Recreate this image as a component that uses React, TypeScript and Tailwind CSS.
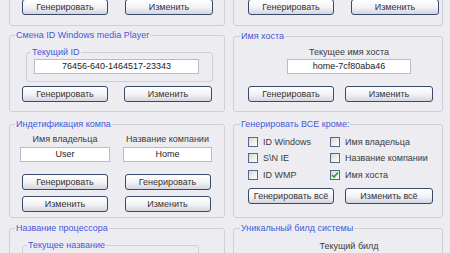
import React from "react"

const font = "font-['Liberation_Sans',Arial,sans-serif]"

function Btn({ label, className = "" }: { label: string; className?: string }) {
  return (
    <button
      className={
        "h-[16px] w-[86px] shrink-0 rounded-[3px] border border-[#3a4a6b] bg-gradient-to-b from-white via-[#f3f3f7] to-[#d5d5e1] text-[9px] leading-none text-[#333] flex items-center justify-center " +
        className
      }
    >
      {label}
    </button>
  )
}

function Field({ value, className = "" }: { value: string; className?: string }) {
  return (
    <div
      className={
        "h-[15px] shrink-0 border border-[#b7bcc8] bg-white text-[9px] leading-none text-[#222] flex items-center justify-center " +
        className
      }
    >
      {value}
    </div>
  )
}

function Legend({ text, className = "" }: { text: string; className?: string }) {
  return <legend className={"px-[1px] text-[9px] leading-[11px] text-[#4457dc] " + className}>{text}</legend>
}

function Check({ label, checked = false }: { label: string; checked?: boolean }) {
  return (
    <div className="flex items-center gap-[5px] h-[10px]">
      <div className="w-[10px] h-[10px] border border-[#55698e] bg-gradient-to-br from-[#d9d9d3] to-white flex items-center justify-center">
        {checked && (
          <svg width="8" height="8" viewBox="0 0 8 8">
            <path d="M1 4 L3 6 L7 1.5" stroke="#21a121" strokeWidth="1.6" fill="none" />
          </svg>
        )}
      </div>
      <span className="text-[9px] leading-none text-[#3a3a3a]">{label}</span>
    </div>
  )
}

function TopGroup({ pl }: { pl: string }) {
  return (
    <div className={"h-[26px] border-x border-b border-[#cfcfd8] rounded-b-[3px] flex " + pl}>
      <div className="flex -mt-px">
        <Btn label="Генерировать" />
        <Btn label="Изменить" className="ml-[17px] w-[88px]" />
      </div>
    </div>
  )
}

export default function App() {
  return (
    <div className={"w-[450px] h-[253px] overflow-hidden bg-[#ededf1] flex gap-[8px] pl-[9px] " + font}>
      {/* left column */}
      <div className="w-[216px] shrink-0">
        <TopGroup pl="pl-[12px]" />

        <fieldset className="block mt-[4px] border border-[#cfcfd8] rounded-[3px] pb-[9px]">
          <Legend text="Смена ID Windows media Player" className="ml-[5px]" />
          <fieldset className="block mt-[6px] ml-[16px] w-[187px] border border-[#cfcfd8] rounded-[3px] pb-[7px]">
            <Legend text="Текущий ID" className="ml-[4px]" />
            <Field value="76456-640-1464517-23343" className="mt-[1px] ml-[7px] w-[165px]" />
          </fieldset>
          <div className="flex mt-[4px] pl-[12px]">
            <Btn label="Генерировать" />
            <Btn label="Изменить" className="ml-[16px] w-[88px]" />
          </div>
        </fieldset>

        <fieldset className="block mt-[7px] border border-[#cfcfd8] rounded-[3px] pb-[5px]">
          <Legend text="Индетификация компа" className="ml-[5px]" />
          <div className="flex mt-[4px]">
            <div className="ml-[10px] w-[90px] flex flex-col items-center">
              <span className="text-[9px] leading-[11px] text-[#3a3a3a]">Имя владельца</span>
              <Field value="User" className="mt-[2px] w-[90px]" />
              <Btn label="Генерировать" className="mt-[12px]" />
              <Btn label="Изменить" className="mt-[6px]" />
            </div>
            <div className="ml-[13px] w-[89px] flex flex-col items-center">
              <span className="text-[9px] leading-[11px] text-[#3a3a3a]">Название компании</span>
              <Field value="Home" className="mt-[2px] w-[89px]" />
              <Btn label="Генерировать" className="mt-[12px]" />
              <Btn label="Изменить" className="mt-[6px]" />
            </div>
          </div>
        </fieldset>

        <fieldset className="block mt-[5px] border border-[#cfcfd8] rounded-[3px] pb-[20px]">
          <Legend text="Название процессора" className="ml-[5px]" />
          <fieldset className="block mt-[6px] ml-[12px] w-[177px] h-[40px] border border-[#cfcfd8] rounded-[3px]">
            <Legend text="Текущее название" className="ml-[4px]" />
          </fieldset>
        </fieldset>
      </div>

      {/* right column */}
      <div className="w-[210px] shrink-0">
        <TopGroup pl="pl-[14px]" />

        <fieldset className="block mt-[5px] border border-[#cfcfd8] rounded-[3px] pb-[9px]">
          <Legend text="Имя хоста" className="ml-[6px]" />
          <div className="mt-[5px] ml-[53px] w-[124px] flex flex-col items-center">
            <span className="text-[9px] leading-[11px] text-[#3a3a3a]">Текущее имя хоста</span>
            <Field value="home-7cf80aba46" className="mt-[1px] w-[124px]" />
          </div>
          <div className="flex mt-[12px] pl-[14px]">
            <Btn label="Генерировать" />
            <Btn label="Изменить" className="ml-[11px] w-[88px]" />
          </div>
        </fieldset>

        <fieldset className="block mt-[7px] border border-[#cfcfd8] rounded-[3px] pb-[13px]">
          <Legend text="Генерировать ВСЕ кроме:" className="ml-[6px]" />
          <div className="mt-[7px] ml-[14px] flex">
            <div className="w-[82px] flex flex-col gap-[6px]">
              <Check label="ID Windows" />
              <Check label="S\N IE" />
              <div className="mt-[1px]">
                <Check label="ID WMP" />
              </div>
            </div>
            <div className="flex flex-col gap-[6px]">
              <Check label="Имя владельца" />
              <Check label="Название компании" />
              <div className="mt-[1px]">
                <Check label="Имя хоста" checked />
              </div>
            </div>
          </div>
          <div className="flex mt-[8px] pl-[14px]">
            <Btn label="Генерировать всё" />
            <Btn label="Изменить всё" className="ml-[11px] w-[88px]" />
          </div>
        </fieldset>

        <fieldset className="block mt-[5px] border border-[#cfcfd8] rounded-[3px] pb-[20px]">
          <Legend text="Уникальный билд системы" className="ml-[6px]" />
          <div className="mt-[7px] ml-[53px] w-[124px] flex flex-col items-center">
            <span className="text-[9px] leading-[11px] text-[#3a3a3a]">Текущий билд</span>
          </div>
        </fieldset>
      </div>
    </div>
  )
}
